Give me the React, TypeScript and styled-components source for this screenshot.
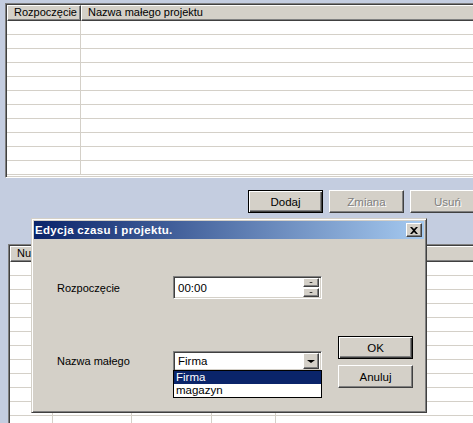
import React from "react";
import styled, { createGlobalStyle, css } from "styled-components";

const Global = createGlobalStyle`
  html, body { margin: 0; padding: 0; background: #c4cde0; }
  body { font-family: "Liberation Sans", Arial, sans-serif; font-size: 11px; color: #000; }
`;

const Screen = styled.div`
  position: relative;
  width: 473px;
  height: 423px;
  overflow: hidden;
  background: #c4cde0;
  display: flex;
  flex-direction: column;
`;

const ListView = styled.div<{ $left: number; $top: number; $height: number }>`
  margin: ${(p) => p.$top}px 0 0 ${(p) => p.$left}px;
  width: 560px;
  height: ${(p) => p.$height}px;
  flex: none;
  box-sizing: border-box;
  border: 1px solid;
  border-color: #808080 #fff #fff #808080;
  box-shadow: inset 1px 1px #404040, inset -1px -1px #d4d0c8;
  padding: 1px;
  background: #fff;
  overflow: hidden;
`;

const HeaderRow = styled.div<{ $cols: string }>`
  display: grid;
  grid-template-columns: ${(p) => p.$cols};
  height: 16px;
`;

const HeaderCell = styled.div`
  box-sizing: border-box;
  background: #d4d0c8;
  border-top: 1px solid #fff;
  border-left: 1px solid #fff;
  border-right: 1px solid #404040;
  border-bottom: 1px solid #404040;
  box-shadow: inset -1px -1px #808080;
  padding: 0 0 0 6px;
  line-height: 13px;
  font-size: 11px;
  white-space: nowrap;
  overflow: hidden;
`;

const Row = styled.div<{ $cols: string }>`
  display: grid;
  grid-template-columns: ${(p) => p.$cols};
  height: 14px;
`;

const Cell = styled.div`
  box-sizing: border-box;
  border-right: 1px solid #d4d0c8;
  border-bottom: 1px solid #d4d0c8;
`;

const ButtonBar = styled.div`
  display: flex;
  gap: 6px;
  margin: 12px 0 0 248px;
  flex: none;
`;

const raised = css`
  border: 1px solid;
  border-color: #fff #404040 #404040 #fff;
  box-shadow: inset -1px -1px #808080, inset 1px 1px #d4d0c8;
`;

const WinButton = styled.button<{ $default?: boolean; $disabled?: boolean }>`
  width: 75px;
  height: 23px;
  flex: none;
  box-sizing: border-box;
  background: #d4d0c8;
  font-family: "Liberation Sans", Arial, sans-serif;
  font-size: 11.5px;
  padding: 0;
  color: ${(p) => (p.$disabled ? "#808080" : "#000")};
  text-shadow: ${(p) => (p.$disabled ? "1px 1px #fff" : "none")};
  ${(p) =>
    p.$default
      ? css`
          border: 1px solid #000;
          box-shadow: inset 1px 1px #fff, inset -1px -1px #404040, inset -2px -2px #808080;
        `
      : raised}
`;

const Dialog = styled.div`
  position: absolute;
  left: 31px;
  top: 218px;
  width: 396px;
  height: 195px;
  box-sizing: border-box;
  background: #d4d0c8;
  border: 1px solid;
  border-color: #d4d0c8 #404040 #404040 #d4d0c8;
  box-shadow: inset 1px 1px #fff, inset -1px -1px #808080;
  padding: 2px;
  display: flex;
  flex-direction: column;
`;

const TitleBar = styled.div`
  height: 18px;
  flex: none;
  background: linear-gradient(90deg, #0a246a, #a6caf0);
  display: flex;
  align-items: center;
  justify-content: space-between;
  padding: 0 2px 0 1px;
`;

const Title = styled.span`
  color: #fff;
  font-weight: bold;
  font-family: "Liberation Sans", Arial, sans-serif;
  font-size: 11.5px;
  letter-spacing: 0.3px;
`;

const CloseButton = styled.div`
  width: 16px;
  height: 14px;
  box-sizing: border-box;
  background: #d4d0c8;
  ${raised}
  display: flex;
  align-items: center;
  justify-content: center;
`;

const DialogBody = styled.div`
  flex: 1;
  display: flex;
  padding-left: 23px;
`;

const Form = styled.div`
  width: 265px;
  padding-top: 37px;
  display: flex;
  flex-direction: column;
  gap: 52px;
`;

const Field = styled.div<{ $h: number }>`
  display: flex;
  align-items: center;
  height: ${(p) => p.$h}px;
`;

const Label = styled.div`
  width: 116px;
  flex: none;
  font-size: 11px;
`;

const sunken = css`
  border: 1px solid;
  border-color: #808080 #fff #fff #808080;
  box-shadow: inset 1px 1px #404040, inset -1px -1px #d4d0c8;
`;

const InputBox = styled.div<{ $h: number }>`
  position: relative;
  width: 149px;
  height: ${(p) => p.$h}px;
  box-sizing: border-box;
  background: #fff;
  ${sunken}
  display: flex;
  align-items: center;
  padding: 0 2px 0 4px;
  font-size: 11.5px;
`;

const InputText = styled.span`
  flex: 1;
`;

const Spin = styled.div`
  display: flex;
  flex-direction: column;
  gap: 1px;
  width: 16px;
  align-self: stretch;
  padding: 1px 0;
`;

const SpinBtn = styled.div`
  flex: 1;
  box-sizing: border-box;
  background: #d4d0c8;
  ${raised}
  display: flex;
  align-items: center;
  justify-content: center;
`;

const Arrow = styled.span<{ $up?: boolean; $size: number }>`
  width: 0;
  height: 0;
  border-left: ${(p) => p.$size}px solid transparent;
  border-right: ${(p) => p.$size}px solid transparent;
  ${(p) =>
    p.$up
      ? css`border-bottom: ${Math.ceil(p.$size / 2) + (p.$size > 2 ? 1 : 0)}px solid #000;`
      : css`border-top: ${Math.ceil(p.$size / 2) + (p.$size > 2 ? 1 : 0)}px solid #000;`}
`;

const ComboBtn = styled.div`
  width: 16px;
  height: 16px;
  box-sizing: border-box;
  background: #d4d0c8;
  ${raised}
  display: flex;
  align-items: center;
  justify-content: center;
`;

const DropList = styled.div`
  position: absolute;
  left: -1px;
  top: 100%;
  width: 149px;
  box-sizing: border-box;
  border: 1px solid #000;
  background: #fff;
  z-index: 2;
`;

const DropItem = styled.div<{ $selected?: boolean }>`
  height: 13px;
  line-height: 13px;
  padding-left: 2px;
  background: ${(p) => (p.$selected ? "#0a246a" : "#fff")};
  color: ${(p) => (p.$selected ? "#fff" : "#000")};
`;

const ButtonColumn = styled.div`
  margin-left: 16px;
  padding-top: 97px;
  display: flex;
  flex-direction: column;
  gap: 6px;
`;

const topCols = "74px 1fr";
const bottomCols = "43px 79px 80px 64px 1fr";

export default function App() {
  const topRows = Array.from({ length: 11 });
  const bottomRows = Array.from({ length: 12 });
  return (
    <>
      <Global />
      <Screen>
        <ListView $left={5} $top={3} $height={175}>
          <HeaderRow $cols={topCols}>
            <HeaderCell>Rozpoczęcie</HeaderCell>
            <HeaderCell>Nazwa małego projektu</HeaderCell>
          </HeaderRow>
          {topRows.map((_, i) => (
            <Row key={i} $cols={topCols}>
              <Cell />
              <Cell />
            </Row>
          ))}
        </ListView>
        <ButtonBar>
          <WinButton $default>Dodaj</WinButton>
          <WinButton $disabled>Zmiana</WinButton>
          <WinButton $disabled>Usuń</WinButton>
        </ButtonBar>
        <ListView $left={8} $top={31} $height={200}>
          <HeaderRow $cols={bottomCols}>
            <HeaderCell>Numer</HeaderCell>
            <HeaderCell>Data</HeaderCell>
            <HeaderCell>Czas</HeaderCell>
            <HeaderCell>Projekt</HeaderCell>
            <HeaderCell />
          </HeaderRow>
          {bottomRows.map((_, i) => (
            <Row key={i} $cols={bottomCols}>
              <Cell />
              <Cell />
              <Cell />
              <Cell />
              <Cell />
            </Row>
          ))}
        </ListView>

        <Dialog>
          <TitleBar>
            <Title>Edycja czasu i projektu.</Title>
            <CloseButton>
              <svg width="8" height="7" viewBox="0 0 8 7">
                <path d="M0 0h2l2 2 2-2h2L5 3.5 8 7H6L4 5 2 7H0l3-3.5z" fill="#000" />
              </svg>
            </CloseButton>
          </TitleBar>
          <DialogBody>
            <Form>
              <Field $h={23}>
                <Label>Rozpoczęcie</Label>
                <InputBox $h={23}>
                  <InputText>00:00</InputText>
                  <Spin>
                    <SpinBtn>
                      <Arrow $up $size={2} />
                    </SpinBtn>
                    <SpinBtn>
                      <Arrow $size={2} />
                    </SpinBtn>
                  </Spin>
                </InputBox>
              </Field>
              <Field $h={20}>
                <Label>Nazwa małego</Label>
                <InputBox $h={20}>
                  <InputText>Firma</InputText>
                  <ComboBtn>
                    <Arrow $size={4} />
                  </ComboBtn>
                  <DropList>
                    <DropItem $selected>Firma</DropItem>
                    <DropItem>magazyn</DropItem>
                  </DropList>
                </InputBox>
              </Field>
            </Form>
            <ButtonColumn>
              <WinButton $default>OK</WinButton>
              <WinButton>Anuluj</WinButton>
            </ButtonColumn>
          </DialogBody>
        </Dialog>
      </Screen>
    </>
  );
}
